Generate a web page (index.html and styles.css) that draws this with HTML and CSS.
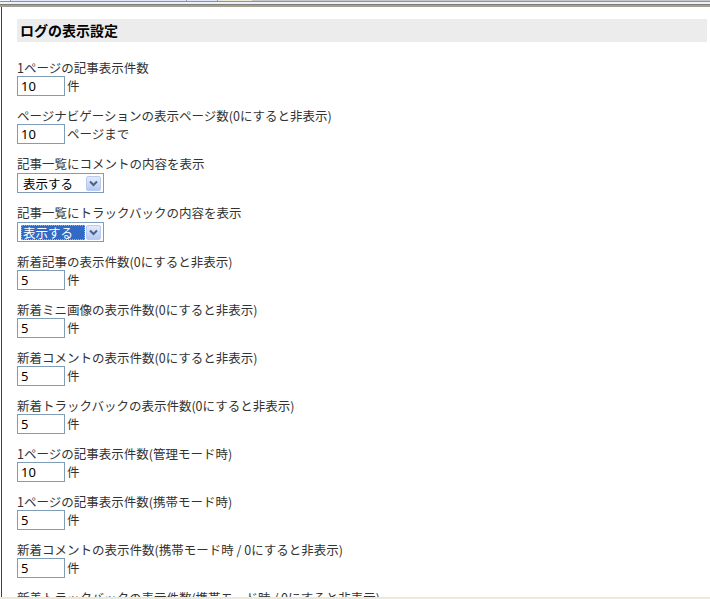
FILE: index.html
```html
<!DOCTYPE html>
<html lang="ja">
<head>
<meta charset="utf-8">
<title>ログの表示設定</title>
<link rel="stylesheet" href="styles.css">
</head>
<body>
<div class="frame-top">
  <div class="tabs">
    <span class="tab tab-a"></span>
    <span class="tab tab-b"></span>
    <span class="tab tab-c"></span>
    <span class="tab tab-d"></span>
    <span class="tab tab-rest"></span>
  </div>
  <div class="line line-1"></div>
  <div class="line line-2"></div>
  <div class="line line-3"></div>
  <div class="line line-4"></div>
</div>
<main class="page">
  <h2 class="section-title">ログの表示設定</h2>

  <div class="field">
    <div class="label">1ページの記事表示件数</div>
    <div class="control"><input class="num" type="text" value="10"><span class="unit">件</span></div>
  </div>

  <div class="field">
    <div class="label">ページナビゲーションの表示ページ数(0にすると非表示)</div>
    <div class="control"><input class="num" type="text" value="10"><span class="unit">ページまで</span></div>
  </div>

  <div class="field field-select">
    <div class="label">記事一覧にコメントの内容を表示</div>
    <div class="control">
      <div class="combo"><span class="combo-text">表示する</span><span class="combo-btn"><svg viewBox="0 0 15 15" width="15" height="15"><path d="M4 5.5 L7.5 9 L11 5.5" fill="none" stroke="#4d6185" stroke-width="2"/></svg></span></div>
    </div>
  </div>

  <div class="field field-select">
    <div class="label">記事一覧にトラックバックの内容を表示</div>
    <div class="control">
      <div class="combo combo-focus"><span class="combo-text">表示する</span><span class="combo-btn"><svg viewBox="0 0 15 15" width="15" height="15"><path d="M4 5.5 L7.5 9 L11 5.5" fill="none" stroke="#4d6185" stroke-width="2"/></svg></span></div>
    </div>
  </div>

  <div class="field">
    <div class="label">新着記事の表示件数(0にすると非表示)</div>
    <div class="control"><input class="num" type="text" value="5"><span class="unit">件</span></div>
  </div>

  <div class="field">
    <div class="label">新着ミニ画像の表示件数(0にすると非表示)</div>
    <div class="control"><input class="num" type="text" value="5"><span class="unit">件</span></div>
  </div>

  <div class="field">
    <div class="label">新着コメントの表示件数(0にすると非表示)</div>
    <div class="control"><input class="num" type="text" value="5"><span class="unit">件</span></div>
  </div>

  <div class="field">
    <div class="label">新着トラックバックの表示件数(0にすると非表示)</div>
    <div class="control"><input class="num" type="text" value="5"><span class="unit">件</span></div>
  </div>

  <div class="field">
    <div class="label">1ページの記事表示件数(管理モード時)</div>
    <div class="control"><input class="num" type="text" value="10"><span class="unit">件</span></div>
  </div>

  <div class="field">
    <div class="label">1ページの記事表示件数(携帯モード時)</div>
    <div class="control"><input class="num" type="text" value="5"><span class="unit">件</span></div>
  </div>

  <div class="field">
    <div class="label">新着コメントの表示件数(携帯モード時 / 0にすると非表示)</div>
    <div class="control"><input class="num" type="text" value="5"><span class="unit">件</span></div>
  </div>

  <div class="field">
    <div class="label">新着トラックバックの表示件数(携帯モード時 / 0にすると非表示)</div>
    <div class="control"><input class="num" type="text" value="5"><span class="unit">件</span></div>
  </div>
</main>
<div class="frame-bottom"></div>
</body>
</html>
```

FILE: styles.css
```css
html, body {
  margin: 0;
  padding: 0;
  overflow: hidden;
  background: #ffffff;
}

body {
  font-family: "Noto Sans CJK JP", "Noto Sans", sans-serif;
  font-size: 12.5px;
  color: #333333;
}

/* window frame at the top */
.frame-top {
  display: flex;
  flex-direction: column;
}
.tabs {
  display: flex;
  height: 1px;
}
.tab { height: 1px; }
.tab-a { width: 10px; background: #f2f4f8; }
.tab-b { width: 175px; background: #dfe7f6; border-left: 1px solid #8f9bb0; }
.tab-c { width: 30px; background: #dfe7f6; border-left: 1px solid #8f9bb0; }
.tab-d { width: 34px; background: #ece9d8; border-left: 1px solid #8f9bb0; }
.tab-rest { flex: 1; background: #c6c6c6; }
.line { width: 100%; }
.line-1 { height: 1px; background: #8d93a0; }
.line-2 { height: 2px; background: #eef0f8; }
.line-3 { height: 1px; background: #7c7c7c; }
.line-4 { height: 2px; background: #a5a08e; }

.frame-bottom {
  position: fixed;
  left: 0;
  right: 0;
  bottom: 0;
  height: 2px;
  background: #ece9d8;
}

/* page */
.page {
  margin-left: 1px;
  border-left: 1px solid #404040;
  padding: 12px 3px 40px 15px;
}

.section-title {
  margin: 0 0 19px 0;
  height: 23px;
  line-height: 23px;
  padding-left: 3px;
  background: #ececec;
  font-size: 14px;
  font-weight: bold;
  color: #000000;
}

.field {
  margin-bottom: 13px;
}

.label {
  box-sizing: border-box;
  height: 15px;
  line-height: 13px;
  padding-bottom: 2px;
  white-space: nowrap;
}

.control {
  display: flex;
  align-items: center;
  gap: 2px;
  height: 20px;
}

.field-select .control {
  margin-top: 1px;
}

.num {
  box-sizing: border-box;
  width: 48px;
  height: 20px;
  margin: 0;
  padding: 0 3px;
  border: 1px solid #7f9db9;
  background: #ffffff;
  font-family: "Noto Sans", sans-serif;
  font-size: 13px;
  color: #000000;
  outline: none;
}

.unit {
  line-height: 20px;
  white-space: nowrap;
}

.combo {
  box-sizing: border-box;
  width: 87px;
  height: 20px;
  border: 1px solid #7f9db9;
  background: #ffffff;
  display: flex;
  align-items: center;
  justify-content: space-between;
  padding: 0 2px 0 2px;
}

.combo-text {
  height: 15px;
  line-height: 15px;
  width: 64px;
  box-sizing: border-box;
  padding-left: 3px;
  font-size: 12.5px;
  color: #000000;
  white-space: nowrap;
}

.combo-focus .combo-text {
  background: #316ac5;
  color: #ffffff;
  outline: 1px dotted #e3a64a;
  outline-offset: -1px;
  padding-left: 2px;
  margin-left: 1px;
}

.combo-btn {
  box-sizing: border-box;
  width: 15px;
  height: 15px;
  margin-top: 1px;
  border: 1px solid #b9cbf3;
  border-radius: 2px;
  background: linear-gradient(#e3ebfd, #b5c9f4);
  display: flex;
  align-items: center;
  justify-content: center;
  overflow: hidden;
}

.combo-btn svg {
  display: block;
  flex: none;
}
```
